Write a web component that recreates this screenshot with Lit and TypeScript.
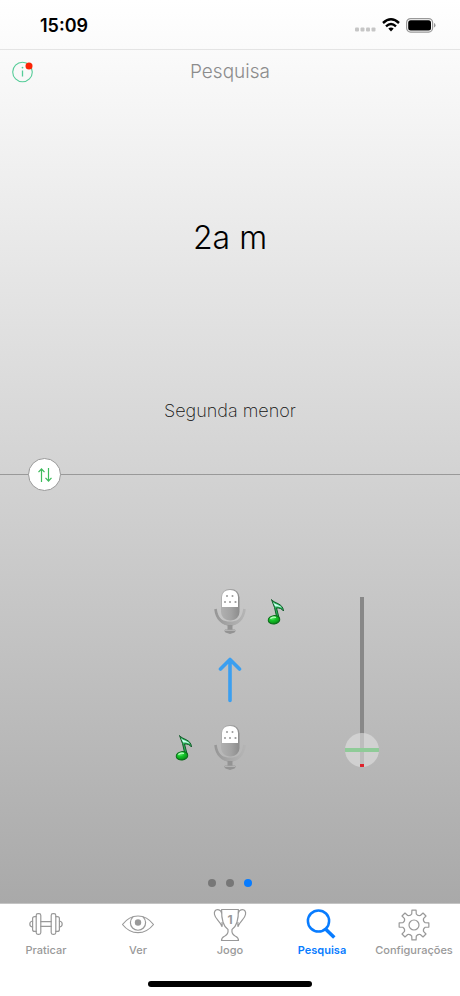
import { LitElement, html, css, svg } from "lit";
import { customElement, state } from "lit/decorators.js";
import { classMap } from "lit/directives/class-map.js";

const gearPath = (): string => {
  const teeth = 8;
  const step = (Math.PI * 2) / teeth;
  const at = (r: number, a: number) =>
    `${(17 + r * Math.sin(a)).toFixed(2)} ${(17 - r * Math.cos(a)).toFixed(2)}`;
  let d = "";
  for (let i = 0; i < teeth; i++) {
    const c = i * step;
    d += `${i === 0 ? "M" : "L"}${at(11.4, c - 0.2)}L${at(15, c - 0.14)}L${at(15, c + 0.14)}L${at(11.4, c + 0.2)}`;
    d += `Q${at(9.6, c + step / 2)} ${at(11.4, c + step - 0.2)}`;
  }
  return d + "Z";
};

const dumbbell = svg`
  <rect x="7.2" y="5.6" width="4.6" height="20.8" rx="1.8"/>
  <rect x="22.2" y="5.6" width="4.6" height="20.8" rx="1.8"/>
  <path d="M7.2 8.6H5.6Q3.6 8.6 3.6 10.6V21.4Q3.6 23.4 5.6 23.4H7.2M26.8 8.6H28.4Q30.4 8.6 30.4 10.6V21.4Q30.4 23.4 28.4 23.4H26.8"/>
  <path d="M3.6 13Q.8 13.4.8 16T3.6 19M30.4 13Q33.2 13.4 33.2 16T30.4 19M11.8 13.6H22.2M11.8 18.4H22.2"/>`;

const eye = svg`
  <path d="M1.5 16.500Q8 8 17 8T32.500 16.500Q26 24.700 17 24.700T1.500 16.500Z"/>
  <path d="M11.800 9.100A7.600 7.600 0 1 0 22.200 9.100"/>
  <circle class="solid" cx="17" cy="14.500" r="3.200"/>`;

const trophy = svg`
  <path d="M8.600 1.500H25.400C25.600 11 23.500 18.500 19 21.500C18.600 24.500 19.500 26.800 22.500 28.200C24.500 29 25.500 30.500 25.500 32.500H8.500C8.500 30.500 9.500 29 11.500 28.200C14.500 26.800 15.400 24.500 15 21.500C10.500 18.500 8.400 11 8.600 1.500Z"/>
  <path d="M8.600 5C7.800 2.300 6.500 1.700 4.500 1.700C2 1.700 1 3.800 1.500 6.500C2.300 11 6.500 12.500 9 18.500M9 18.500C9.300 17 9.200 16 9 14.500M25.400 5C26.200 2.300 27.500 1.700 29.500 1.700C32 1.700 33 3.800 32.500 6.500C31.700 11 27.500 12.500 25 18.500M25 18.500C24.700 17 24.800 16 25 14.500"/>
  <text x="17" y="16" text-anchor="middle">1</text>`;

const lens = svg`
  <circle class="heavy" cx="13.500" cy="13" r="10.600"/>
  <path class="handle" d="M20.500 21L29.300 29.500"/>`;

const gear = svg`<path d=${gearPath()}/><circle cx="17" cy="17" r="5"/>`;

const tabs = [
  { id: "praticar", label: "Praticar", icon: dumbbell },
  { id: "ver", label: "Ver", icon: eye },
  { id: "jogo", label: "Jogo", icon: trophy },
  { id: "pesquisa", label: "Pesquisa", icon: lens },
  { id: "config", label: "Configurações", icon: gear },
];

@customElement("mic-icon")
class MicIcon extends LitElement {
  static styles = css`
    :host { display: block; width: 32px; height: 48px; }
    svg { display: block; }
  `;
  render() {
    return html`<svg width="32" height="48" viewBox="0 0 32 48" aria-hidden="true">
      <defs>
        <linearGradient id="body" x1="0" x2="1"><stop offset="0" stop-color="#b0b0b0"/><stop offset=".55" stop-color="#a2a2a2"/><stop offset="1" stop-color="#8c8c8c"/></linearGradient>
        <linearGradient id="cup" x1="0" x2="1"><stop offset="0" stop-color="#979797"/><stop offset=".5" stop-color="#a8a8a8"/><stop offset="1" stop-color="#b4b4b4"/></linearGradient>
      </defs>
      <path d="M1.500 21C2.500 30 8 36.500 16 36.500S29.500 30 30.500 21" fill="none" stroke="url(#cup)" stroke-width="2.600"/>
      <path d="M2.500 25C5 31 9.500 33.500 16 33.500S27 31 29.500 25C28 33 23 37.500 16 37.500S4 33 2.500 25Z" fill="url(#cup)"/>
      <path d="M13.500 37H18.500V41.500H21Q22.500 43 20.500 44.500L16 46L11.500 44.500Q9.500 43 11 41.500H13.500Z" fill="#939393"/>
      <path d="M11 42.300H21" stroke="#bbb"/>
      <rect x="7" y="1" width="18.500" height="31.500" rx="8.500" fill="url(#body)"/>
      <path d="M8 19V9Q8.500 2 16 2T24 9V19Z" fill="#fff"/>
      <g fill="#999"><circle cx="13" cy="8" r="1"/><circle cx="18.500" cy="8" r="1"/><circle cx="11" cy="14" r="1"/><circle cx="16" cy="14" r="1"/><circle cx="21.500" cy="14" r="1.100"/></g>
    </svg>`;
  }
}

@customElement("note-icon")
class NoteIcon extends LitElement {
  static styles = css`
    :host { display: block; width: 18px; height: 28px; }
    svg { display: block; }
  `;
  render() {
    return html`<svg width="18" height="28" viewBox="0 0 18 28" aria-hidden="true">
      <defs><radialGradient id="g" cx=".4" cy=".25" r=".8"><stop offset="0" stop-color="#6af078"/><stop offset=".4" stop-color="#14c428"/><stop offset="1" stop-color="#078415"/></radialGradient></defs>
      <path d="M4.500 1.500C7 5.500 16 5 16.500 13C14.500 10.500 12.500 9.800 9.500 10L12.200 20.500H10L7.500 9.500Z" fill="#28b658" stroke="#125a2a" stroke-linejoin="round"/>
      <path d="M5.800 4C8.500 6.800 13 6.800 14.800 9.800C12.500 8.500 10.500 8.300 8.200 8.400Z" fill="#c9fff0"/>
      <ellipse cx="7" cy="21.800" rx="5.800" ry="4.200" transform="rotate(-8 7 21.800)" fill="url(#g)" stroke="#0b6a1a"/>
      <path d="M3.800 20.300Q6 18.600 8.500 19.400" stroke="#b8ffc0" stroke-width="1.200" fill="none" stroke-linecap="round"/>
    </svg>`;
  }
}

@customElement("app-root")
class AppRoot extends LitElement {
  @state() private active = "pesquisa";

  static styles = css`
    :host { display: block; font-family: Inter, "Liberation Sans", sans-serif; color: #000; }
    * { box-sizing: border-box; }
    svg { display: block; }
    button { appearance: none; border: 0; padding: 0; background: none; font: inherit; color: inherit; cursor: pointer; }
    h1, h2, p { margin: 0; }
    .screen { min-height: 100vh; display: flex; flex-direction: column; }
    .body { flex: 1; display: grid; grid-template-rows: 50px 44px 380fr 1px 428fr; background: linear-gradient(#fff, #f7f7f7 10%, #d3d3d3 52%, #a9a9a9); }
    .status { padding: 0 24px 0 40px; display: flex; align-items: center; justify-content: space-between; border-bottom: 1px solid #e4e4e4; }
    .time { font-size: 18px; line-height: 24px; font-weight: 600; padding-top: 2px; }
    .signals { display: flex; align-items: center; gap: 6px; padding-top: 1px; }
    .bar { padding: 0 12px; display: grid; grid-template-columns: 1fr auto 1fr; align-items: center; }
    .info { width: 22px; height: 22px; }
    .title { font-size: 19px; line-height: 24px; font-weight: 300; color: #8c8c8c; }
    .upper { display: flex; flex-direction: column; text-align: center; padding-bottom: 34px; }
    .interval { flex: 1; display: grid; place-items: center; font-size: 32px; line-height: 40px; font-weight: 300; }
    .name { font-size: 18px; line-height: 58px; font-weight: 200; color: #111; }
    .divider { background: #999; display: flex; align-items: center; padding-left: 28px; }
    .swap { width: 33px; height: 33px; flex: none; border: 1px solid #999; border-radius: 50%; background: #fff; display: grid; place-items: center; }
    .lower { display: flex; flex-direction: column; }
    .stage { flex: 1; display: grid; grid-template-columns: 1fr 32px 60px 32px 1fr; grid-template-rows: 48px 88px 48px; align-content: center; align-items: center; justify-items: center; padding-top: 22px; }
    .top-mic { grid-area: 1 / 3; }
    .top-note { grid-area: 1 / 4; }
    .arrow { grid-area: 2 / 3; }
    .low-mic { grid-area: 3 / 3; }
    .low-note { grid-area: 3 / 2; }
    .level { grid-area: 1 / 5 / 4 / 6; padding: 4px 28px 0 0; display: flex; }
    .range { appearance: none; writing-mode: vertical-lr; direction: rtl; width: 34px; height: 170px; margin: 0; background: linear-gradient(#888 0 0) center / 4px 100% no-repeat; }
    .range::-webkit-slider-runnable-track { width: 34px; height: 170px; background: none; }
    .range::-webkit-slider-thumb { appearance: none; width: 34px; height: 34px; border-radius: 50%; background: linear-gradient(#e0202a 0 0) bottom / 4px 3px no-repeat, linear-gradient(#8fcb98 0 0) center / 100% 4px no-repeat, rgba(225, 225, 225, 0.6); }
    .pages { height: 40px; display: flex; align-items: center; justify-content: center; gap: 10px; }
    .dot { width: 8px; height: 8px; border-radius: 50%; background: #777; }
    .dot.on { background: #087cff; }
    .tabs { height: 93px; border-top: 1px solid #c4c4c4; background: #fff; display: flex; flex-direction: column; align-items: center; justify-content: space-between; padding-bottom: 9px; }
    .row { width: 100%; display: grid; grid-template-columns: repeat(5, 1fr); padding-top: 4px; }
    .tab { display: flex; flex-direction: column; align-items: center; color: #999; font-size: 11px; line-height: 16px; font-weight: 500; }
    .tab.on { color: #087cff; font-weight: 600; }
    .glyph { fill: none; stroke: currentColor; stroke-width: 1.2; stroke-linejoin: round; stroke-linecap: round; }
    .glyph .solid { fill: currentColor; stroke: none; }
    .glyph text { fill: currentColor; stroke: none; font-size: 12px; font-weight: 700; }
    .glyph .heavy { stroke-width: 2.5; }
    .glyph .handle { stroke-width: 3.5; stroke-linecap: butt; }
    .home { width: 164px; height: 6px; border-radius: 3px; background: #000; }
  `;

  render() {
    return html`<div class="screen">
      <main class="body">
        <div class="status">
          <span class="time">15:09</span>
          <div class="signals">
            <svg width="22" height="18" viewBox="0 0 22 18" fill="#c6c6c6"><rect x="1" y="11.500" width="4" height="4" rx="1"/><rect x="6.500" y="11.500" width="4" height="4" rx="1"/><rect x="12" y="11.500" width="4" height="4" rx="1"/><rect x="17.500" y="11.500" width="4" height="4" rx="1"/></svg>
            <svg width="18" height="14" viewBox="0 0 18 14" fill="none" stroke="#000" stroke-width="2.400"><path d="M1 5Q9-2.400 17 5M4 8.400Q9 3.800 14 8.400"/><path d="M6.300 10.600Q9 8.400 11.700 10.600L9 13.400Z" fill="#000" stroke="none"/></svg>
            <svg width="30" height="15" viewBox="0 0 30 15"><rect x=".6" y=".6" width="26" height="13.500" rx="4" fill="none" stroke="#999" stroke-width="1.200"/><rect x="2.200" y="2.200" width="22.800" height="10.300" rx="2.500"/><path d="M28 5Q29.500 5.500 29.500 7.300T28 9.600Z" fill="#999"/></svg>
          </div>
        </div>
        <header class="bar">
          <button class="info" aria-label="Informações">
            <svg width="22" height="22" viewBox="0 0 22 22"><circle cx="10.500" cy="11" r="9.800" fill="none" stroke="#55cc98" stroke-width="1.100"/><path d="M10.500 9.500V15.500" stroke="#55cc98" stroke-width="1.300"/><circle cx="10.500" cy="6.600" r=".9" fill="#55cc98"/><circle cx="17" cy="5" r="3.500" fill="#fb2405"/></svg>
          </button>
          <h1 class="title">Pesquisa</h1>
        </header>
        <section class="upper">
          <h2 class="interval">2a m</h2>
          <p class="name">Segunda menor</p>
        </section>
        <div class="divider">
          <button class="swap" aria-label="Inverter direção">
            <svg width="16" height="16" viewBox="0 0 16 16" fill="none" stroke="#3dbb5c" stroke-width="1.200"><path d="M4.500 15V2M1.500 5.200L4.500 2L7.500 5.200M11.500 1V14M8.500 10.800L11.500 14L14.500 10.800"/></svg>
          </button>
        </div>
        <section class="lower">
          <div class="stage">
            <button class="top-mic" aria-label="Nota superior"><mic-icon></mic-icon></button>
            <note-icon class="top-note"></note-icon>
            <svg class="arrow" width="24" height="46" viewBox="0 0 24 46" fill="none" stroke="#3b9ff0" stroke-width="3.600" stroke-linecap="round" stroke-linejoin="round"><path d="M12 43.500V3M2.500 12L12 2.500L21.500 12"/></svg>
            <note-icon class="low-note"></note-icon>
            <button class="low-mic" aria-label="Nota inferior"><mic-icon></mic-icon></button>
            <div class="level"><input class="range" type="range" min="0" max="100" value="0" aria-label="Altura"></div>
          </div>
          <div class="pages"><span class="dot"></span><span class="dot"></span><span class="dot on"></span></div>
        </section>
      </main>
      <nav class="tabs">
        <div class="row">
          ${tabs.map((t) => html`<button class=${classMap({ tab: true, on: t.id === this.active })} @click=${() => { this.active = t.id; }}>
            <svg class="glyph" width="34" height="34" viewBox="0 0 34 34" aria-hidden="true">${t.icon}</svg>
            <span>${t.label}</span>
          </button>`)}
        </div>
        <div class="home"></div>
      </nav>
    </div>`;
  }
}
